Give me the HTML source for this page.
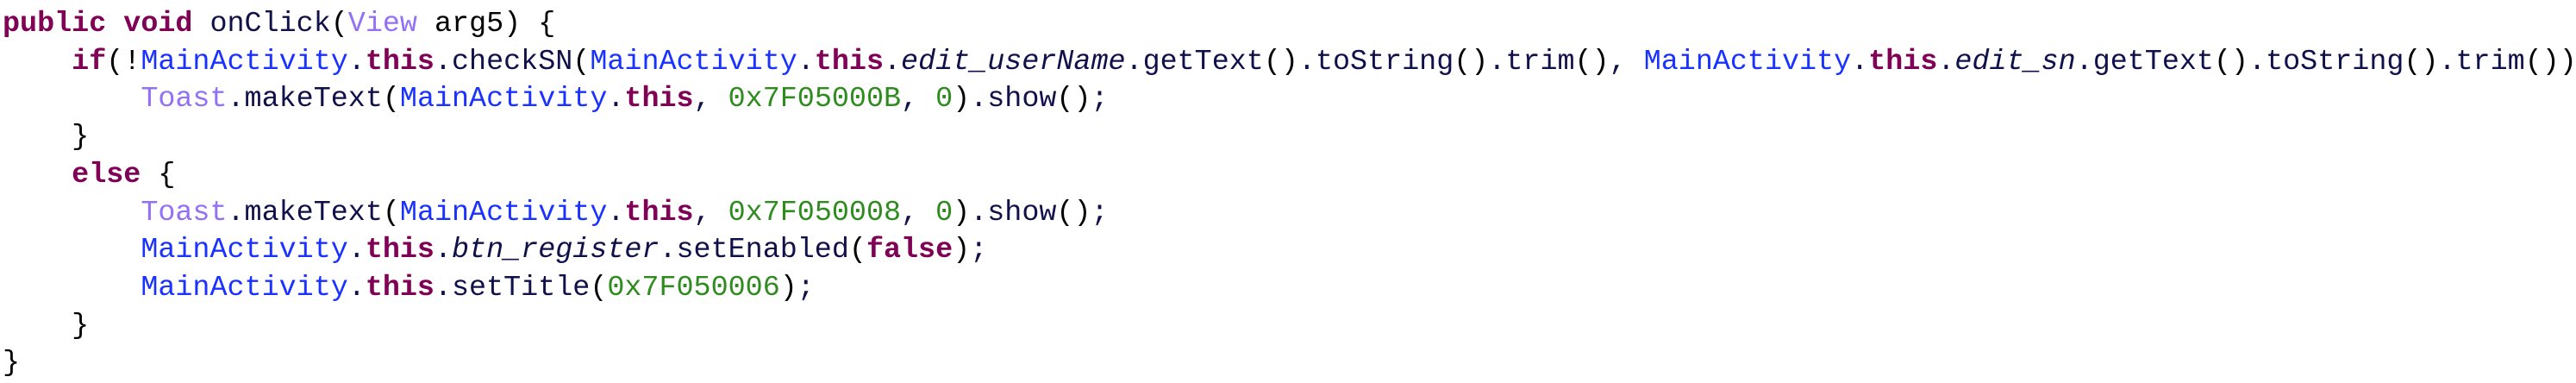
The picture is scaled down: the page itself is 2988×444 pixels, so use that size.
<!DOCTYPE html>
<html><head><meta charset="utf-8"><style>
html,body{margin:0;padding:0;background:#fff;width:2988px;height:444px;overflow:hidden}
pre{margin:0;padding:7px 0 0 3px;height:437px;overflow:hidden;font-family:"Liberation Mono","DejaVu Sans Mono",monospace;font-size:33.4px;line-height:43.7px;color:#10104a}
.k{color:#7f0055;font-weight:bold}
.c{color:#9370f5}
.b{color:#1a32ff}
.n{color:#2e8c1e}
.f{font-style:italic;color:#10104a}
.p{color:#000}
</style></head><body><pre><span class="k">public</span> <span class="k">void</span> onClick<span class="p">(</span><span class="c">View</span> <span class="p">arg5)</span> <span class="p">{</span>
    <span class="k">if</span><span class="p">(!</span><span class="b">MainActivity</span>.<span class="k">this</span>.checkSN<span class="p">(</span><span class="b">MainActivity</span>.<span class="k">this</span>.<span class="f">edit_userName</span>.getText<span class="p">()</span>.toString<span class="p">()</span>.trim<span class="p">()</span>, <span class="b">MainActivity</span>.<span class="k">this</span>.<span class="f">edit_sn</span>.getText<span class="p">()</span>.toString<span class="p">()</span>.trim<span class="p">())</span>
        <span class="c">Toast</span>.makeText<span class="p">(</span><span class="b">MainActivity</span>.<span class="k">this</span>, <span class="n">0x7F05000B</span>, <span class="n">0</span><span class="p">)</span>.show<span class="p">()</span>;
    <span class="p">}</span>
    <span class="k">else</span> <span class="p">{</span>
        <span class="c">Toast</span>.makeText<span class="p">(</span><span class="b">MainActivity</span>.<span class="k">this</span>, <span class="n">0x7F050008</span>, <span class="n">0</span><span class="p">)</span>.show<span class="p">()</span>;
        <span class="b">MainActivity</span>.<span class="k">this</span>.<span class="f">btn_register</span>.setEnabled<span class="p">(</span><span class="k">false</span><span class="p">)</span>;
        <span class="b">MainActivity</span>.<span class="k">this</span>.setTitle<span class="p">(</span><span class="n">0x7F050006</span><span class="p">)</span>;
    <span class="p">}</span>
<span class="p">}</span></pre></body></html>
